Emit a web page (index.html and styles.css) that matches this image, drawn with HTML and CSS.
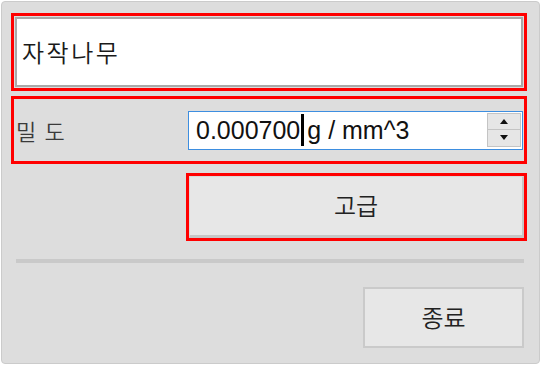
FILE: index.html
```html
<!DOCTYPE html>
<html lang="ko">
<head>
<meta charset="utf-8">
<link rel="stylesheet" href="styles.css">
</head>
<body>
<div class="panel">
  <div class="hl name-box">
    <div class="name-field">자작나무</div>
  </div>
  <div class="hl density-box">
    <span class="label">밀 도</span>
    <div class="spin">
      <span class="value">0.000700</span><span class="caret"></span><span class="unit">g / mm^3</span>
      <div class="spin-btns">
        <div class="spin-btn"><svg width="8" height="5" viewBox="0 0 8 5"><path d="M0 5 L4 0 L8 5 Z" fill="#111"/></svg></div>
        <div class="spin-btn"><svg width="8" height="5" viewBox="0 0 8 5"><path d="M0 0 L8 0 L4 5 Z" fill="#111"/></svg></div>
      </div>
    </div>
  </div>
  <div class="hl adv-box">
    <div class="btn adv-btn">고급</div>
  </div>
  <div class="sep"></div>
  <div class="btn exit-btn">종료</div>
</div>
</body>
</html>
```

FILE: styles.css
```css
html, body {
  margin: 0;
  padding: 0;
  background: #ffffff;
}
body {
  font-family: "Liberation Sans", "Noto Sans CJK KR", sans-serif;
}
.panel {
  margin: 1px 0 0 1px;
  width: 539px;
  height: 363px;
  box-sizing: border-box;
  border: 1px solid #cbcbcb;
  border-radius: 4px;
  background: #dddddd;
  padding: 11px 12px 0 9px;
  display: flex;
  flex-direction: column;
}
.hl {
  box-sizing: border-box;
  border: 3px solid #ff0000;
}
.name-box {
  height: 78px;
  padding: 1px;
  margin-bottom: 5px;
}
.name-field {
  height: 100%;
  box-sizing: border-box;
  border: 2px solid #a9a9a9;
  background: #ffffff;
  display: flex;
  align-items: center;
  padding: 0 0 2px 5px;
  font-family: "Noto Sans CJK KR", sans-serif;
  font-weight: 350;
  font-size: 24px;
  letter-spacing: 2.5px;
  color: #1a1a1a;
}
.density-box {
  height: 68px;
  margin-bottom: 9px;
  display: flex;
  align-items: center;
  padding: 0 1px 0 2px;
}
.label {
  font-family: "Noto Sans CJK KR", sans-serif;
  font-weight: 350;
  font-size: 22px;
  color: #3a3a3a;
  width: 172px;
  letter-spacing: 1px;
}
.spin {
  flex: 1;
  height: 39px;
  box-sizing: border-box;
  border: 1px solid #3d8ee0;
  background: #ffffff;
  display: flex;
  align-items: center;
  padding-left: 7px;
  font-size: 25px;
  color: #111111;
}
.caret {
  width: 3px;
  height: 32px;
  background: #000;
  margin: 0 3px 0 1px;
}
.unit {
  flex: 1;
}
.spin-btns {
  align-self: flex-start;
  margin: 1px 1px 0 0;
  width: 34px;
  height: 34px;
  display: flex;
  flex-direction: column;
}
.spin-btn {
  flex: 1;
  box-sizing: border-box;
  background: #e6e6e6;
  border: 1px solid #c4c4c4;
  display: flex;
  align-items: center;
  justify-content: center;
}
.spin-btn + .spin-btn {
  border-top: 1px solid #c4c4c4;
  margin-top: -1px;
}
.adv-box {
  align-self: flex-end;
  width: 341px;
  height: 68px;
  padding: 0;
}
.btn {
  box-sizing: border-box;
  background: #e7e7e7;
  display: flex;
  align-items: center;
  justify-content: center;
  font-family: "Noto Sans CJK KR", sans-serif;
  font-weight: 350;
  font-size: 24px;
  color: #222222;
}
.adv-btn {
  height: 100%;
  border: 1px solid #dadada;
  border-right: 2px solid #c6c6c6;
  border-bottom: 3px solid #c6c6c6;
  padding-bottom: 4px;
}
.sep {
  height: 4px;
  margin: 18px 3px 0 5px;
  background: #c9c9c9;
}
.exit-btn {
  align-self: flex-end;
  margin: 24px 3px 0 0;
  width: 161px;
  height: 61px;
  border: 2px solid #cacaca;
  padding-bottom: 2px;
}
```
